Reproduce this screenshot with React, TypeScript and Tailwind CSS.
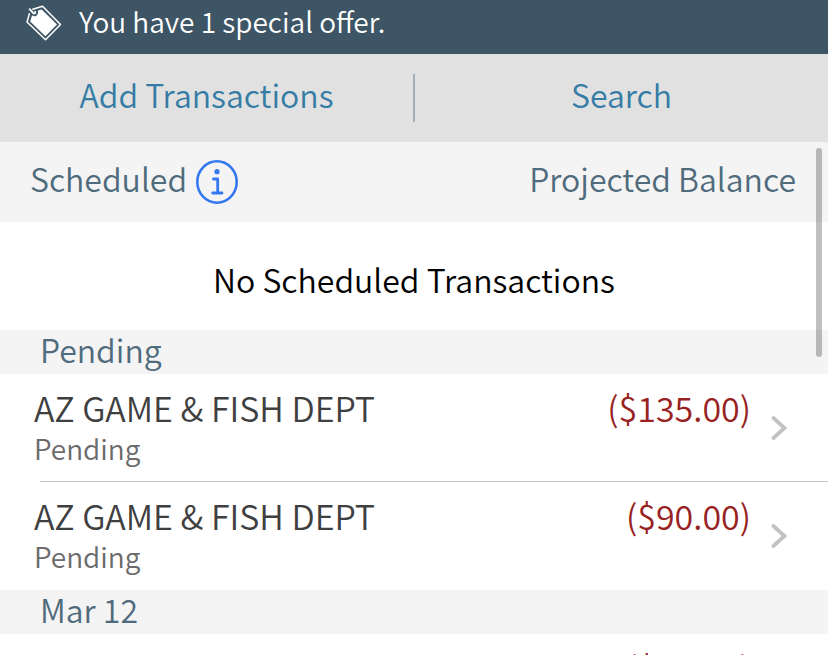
type Transaction = {
  id: number;
  name: string;
  status: string;
  amount: string;
};

const pending: Transaction[] = [
  { id: 1, name: "AZ GAME & FISH DEPT", status: "Pending", amount: "($135.00)" },
  { id: 2, name: "AZ GAME & FISH DEPT", status: "Pending", amount: "($90.00)" },
];

const posted: Transaction[] = [{ id: 3, name: "", status: "", amount: "($11.00)" }];

function TagIcon() {
  return (
    <svg className="h-9 w-9 shrink-0" viewBox="0 0 36 36" fill="none" aria-hidden="true">
      <path d="M4.5 5 16.5 1.2 34.5 19.5 19.5 34.8 1 17Z" stroke="#fff" strokeWidth="1.5" strokeLinejoin="round" />
      <path d="M7 7 15.7 4.4 31 19.5 19.4 31.3 4.2 16.6Z" fill="#fff" />
      <path d="M3.4 5 7.5 8.6Q9.8 9.8 9.9 7" stroke="#3e5565" strokeWidth="4.4" strokeLinecap="round" />
      <path d="M3.6 4.2 7.4 8.2Q9.6 9.4 9.2 6.6" stroke="#fff" strokeWidth="1.8" strokeLinecap="round" />
    </svg>
  );
}

function InfoIcon() {
  return (
    <svg className="h-11 w-[42px]" viewBox="0 0 42 44" fill="none" aria-hidden="true">
      <ellipse cx="21" cy="22" rx="19.7" ry="20.7" stroke="#3478f0" strokeWidth="2.6" />
      <circle cx="21" cy="11.7" r="2.6" fill="#3478f0" />
      <path d="M17.5 19H21.7V33M16.7 33H26" stroke="#3478f0" strokeWidth="2.8" strokeLinecap="round" strokeLinejoin="round" />
    </svg>
  );
}

function Chevron() {
  return (
    <svg className="h-6 w-4 shrink-0" viewBox="0 0 16 24" fill="none" aria-hidden="true">
      <path d="M2.5 2 13.5 12 2.5 22" stroke="#c2c2c4" strokeWidth="3.8" strokeLinecap="round" />
    </svg>
  );
}

function SectionTitle({ title }: { title: string }) {
  return <h2 className="h-11 bg-[#f4f4f4] px-10 leading-[38px] text-[#4f6b7c]">{title}</h2>;
}

function TransactionList({ items }: { items: Transaction[] }) {
  return (
    <ul>
      {items.map((item, index) => (
        <li key={item.id}>
          {index > 0 ? <hr className="-mt-px ml-10 border-[#c4c6c8]" /> : null}
          <button className="flex h-[108px] w-full items-center pr-[41px] pl-[34px] text-left" type="button">
            <span className="flex flex-1 flex-col self-start pt-3.5">
              <span className="text-[34px] leading-10 text-[#3f3f3f]">{item.name}</span>
              <span className="text-[28px] leading-10 text-[#6b6b6b]">{item.status}</span>
            </span>
            <span className="self-start pt-3.5 pr-5 text-[34px] leading-10 text-[#982222]">{item.amount}</span>
            <Chevron />
          </button>
        </li>
      ))}
    </ul>
  );
}

export default function App() {
  return (
    <div className="relative h-screen overflow-hidden bg-white font-['Noto_Sans_CJK_SC_DemiLight','Noto_Sans_CJK_SC',sans-serif] text-[32px] font-[350]">
      <header className="flex h-[54px] items-start gap-[17px] bg-[#3e5565] pl-[26px] text-[28px] text-white">
        <div className="pt-[5px]">
          <TagIcon />
        </div>
        <p className="leading-[42px]">You have 1 special offer.</p>
      </header>

      <nav className="flex h-[88px] items-center bg-[#e1e1e1] text-[#357ca5]">
        <button className="flex-1 pb-2 leading-10" type="button">
          Add Transactions
        </button>
        <div className="h-12 w-0.5 bg-[#9eb0bb]" />
        <button className="flex-1 pb-2 leading-10" type="button">
          Search
        </button>
      </nav>

      <main>
        <div className="flex h-20 items-center justify-between bg-[#f4f4f4] pr-8 pl-[30px] text-[#4f6b7c]">
          <div className="flex items-center gap-[9px]">
            <h2 className="pb-2 leading-10">Scheduled</h2>
            <button type="button" aria-label="About scheduled transactions">
              <InfoIcon />
            </button>
          </div>
          <p className="pb-2 leading-10">Projected Balance</p>
        </div>
        <p className="pt-[35px] pb-[29px] text-center leading-11 text-black">No Scheduled Transactions</p>

        <SectionTitle title="Pending" />
        <TransactionList items={pending} />
        <SectionTitle title="Mar 12" />
        <TransactionList items={posted} />
      </main>

      <div className="absolute top-[148px] right-1.5 h-[209px] w-1.5 rounded-full bg-black/25" />
    </div>
  );
}
